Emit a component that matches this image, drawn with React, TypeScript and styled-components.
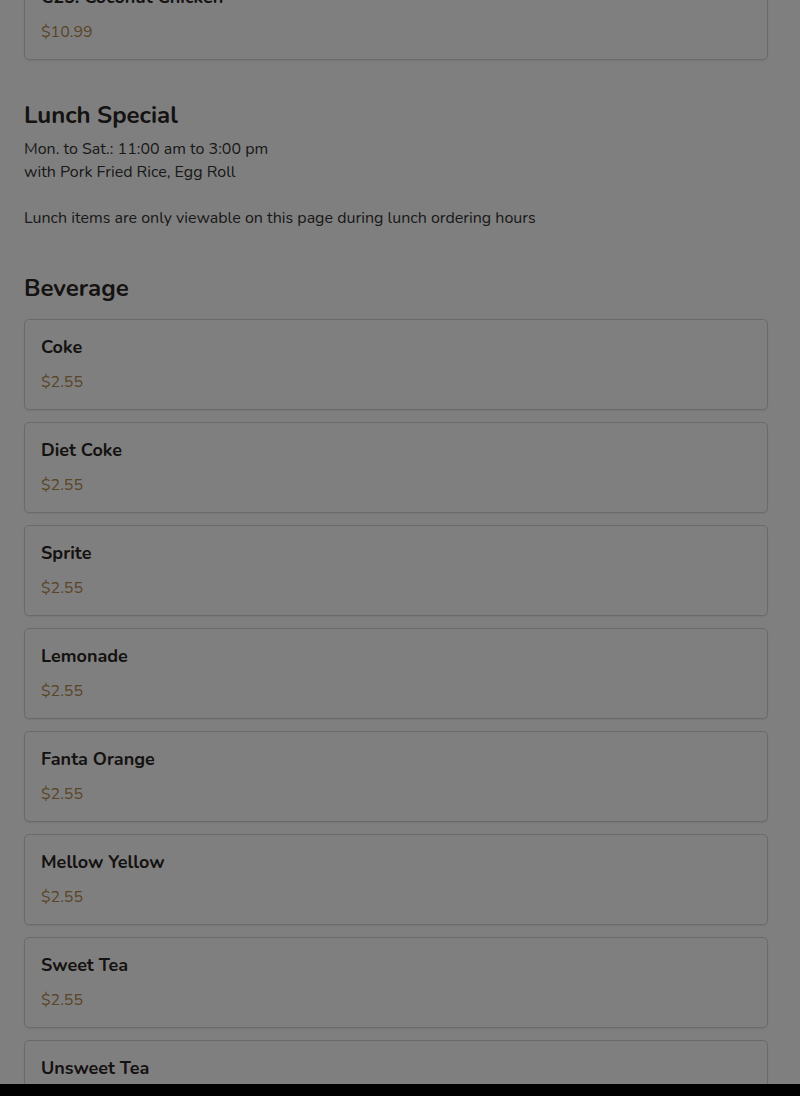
import styled, { createGlobalStyle } from "styled-components";

const GlobalStyle = createGlobalStyle`
  * { box-sizing: border-box; }
  html, body { margin: 0; padding: 0; }
  body {
    font-family: "Nunito", "Lato", "Noto Sans", sans-serif;
    color: #2b2424;
    background: #000;
  }
`;

const Page = styled.div`
  height: 100vh;
  display: flex;
  flex-direction: column;
`;

const Viewport = styled.main`
  flex: 1;
  overflow: hidden;
  background: #fff;
`;

const BottomBar = styled.div`
  height: 12px;
  background: #000;
`;

const Content = styled.div`
  padding: 0 32px 0 24px;
  margin-top: -31px;
`;

const Section = styled.section<{ $gap?: number }>`
  margin-top: ${(p) => p.$gap ?? 0}px;
`;

const Heading = styled.h2`
  margin: 0 0 7px;
  font-size: 24px;
  line-height: 32px;
  font-weight: 700;
  color: #2b2424;
`;

const Note = styled.p`
  margin: 0;
  font-size: 16px;
  line-height: 23px;
  color: #333;
`;

const List = styled.div`
  display: flex;
  flex-direction: column;
  gap: 12px;
  margin-top: 15px;
`;

const Card = styled.div`
  border: 1px solid #d4d4d4;
  border-radius: 5px;
  padding: 16px;
  height: 91px;
  background: #fff;
  box-shadow: 0 1px 2px rgba(0, 0, 0, 0.08);
`;

const ItemName = styled.div`
  font-size: 18px;
  line-height: 22px;
  font-weight: 700;
  color: #2b2424;
`;

const Price = styled.div`
  margin-top: 12px;
  font-size: 16px;
  line-height: 24px;
  color: #b38a4e;
`;

const Backdrop = styled.div`
  position: fixed;
  inset: 0;
  background: rgba(0, 0, 0, 0.5);
`;

interface Item {
  name: string;
  price: string;
}

const beverages: Item[] = [
  { name: "Coke", price: "$2.55" },
  { name: "Diet Coke", price: "$2.55" },
  { name: "Sprite", price: "$2.55" },
  { name: "Lemonade", price: "$2.55" },
  { name: "Fanta Orange", price: "$2.55" },
  { name: "Mellow Yellow", price: "$2.55" },
  { name: "Sweet Tea", price: "$2.55" },
  { name: "Unsweet Tea", price: "$2.55" },
];

function MenuCard({ item }: { item: Item }) {
  return (
    <Card>
      <ItemName>{item.name}</ItemName>
      <Price>{item.price}</Price>
    </Card>
  );
}

export default function App() {
  return (
    <>
      <GlobalStyle />
      <Page>
        <Viewport>
          <Content>
            <MenuCard item={{ name: "C25. Coconut Chicken", price: "$10.99" }} />
            <Section $gap={39}>
              <Heading>Lunch Special</Heading>
              <Note>Mon. to Sat.: 11:00 am to 3:00 pm</Note>
              <Note>with Pork Fried Rice, Egg Roll</Note>
              <Note>&nbsp;</Note>
              <Note>Lunch items are only viewable on this page during lunch ordering hours</Note>
            </Section>
            <Section $gap={42}>
              <Heading>Beverage</Heading>
              <List>
                {beverages.map((b) => (
                  <MenuCard key={b.name} item={b} />
                ))}
              </List>
            </Section>
          </Content>
        </Viewport>
        <BottomBar />
      </Page>
      <Backdrop />
    </>
  );
}
